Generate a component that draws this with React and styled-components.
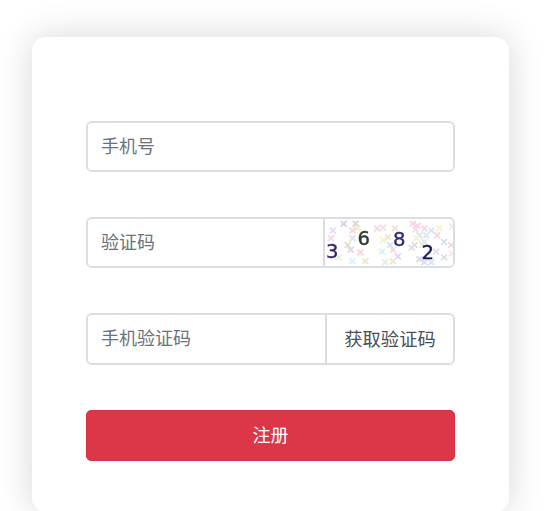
import React from "react";
import styled, { createGlobalStyle } from "styled-components";

const Global = createGlobalStyle`
  html, body { margin: 0; padding: 0; background: #fff; height: 511px; overflow: hidden; }
  body { font-family: "Noto Sans CJK SC", "Liberation Sans", sans-serif; }
  #root { height: 511px; overflow: hidden; }
`;

const Page = styled.div`
  height: 511px;
  padding: 37px 41px 0 32px;
  box-sizing: border-box;
  overflow: hidden;
`;

const Card = styled.form`
  height: 475px;
  box-sizing: border-box;
  padding: 84px 54px 0;
  background: #fff;
  border-radius: 14px;
  box-shadow: 0 0 36px rgba(0, 0, 0, 0.16);
  display: flex;
  flex-direction: column;
  gap: 45px;
`;

const Group = styled.div`
  display: flex;
  height: ${(p) => (p.$tall ? 52 : 51)}px;
  box-sizing: border-box;
  border: 2px solid #d9dee4;
  border-radius: 6px;
  overflow: hidden;
`;

const Field = styled.input`
  flex: 1;
  min-width: 0;
  border: 0;
  outline: 0;
  padding: 0 13px 4px;
  font: 400 18px "Noto Sans CJK SC", sans-serif;
  color: #495057;
  background: #fff;
  &::placeholder { color: #6a737c; opacity: 1; }
`;

const CaptchaBox = styled.div`
  width: 130px;
  flex: none;
  box-sizing: border-box;
  border-left: 2px solid #d9dee4;
  svg { display: block; }
`;

const SendButton = styled.button`
  width: 128px;
  flex: none;
  border: 0;
  border-left: 2px solid #d9dee4;
  background: #fff;
  padding: 0 0 3px;
  font: 400 18.3px "Noto Sans CJK SC", sans-serif;
  color: #495057;
`;

const Submit = styled.button`
  height: 51px;
  border: 1px solid #d92f45;
  border-radius: 5px;
  background: #db3749;
  color: #fff;
  padding: 0 0 4px;
  font: 400 18px "Noto Sans CJK SC", sans-serif;
`;

const crosses = [
  [19, 5, "#cdb6d6"], [31, 5, "#c9c3c9"], [28, 12, "#f3bfe0"], [8, 12, "#d9ccf0"],
  [6, 20, "#f7c7da"], [33, 10, "#efe6a8"], [28, 20, "#d6d2ea"], [23, 27, "#d8d3b0"],
  [26, 32, "#d3c6e6"], [36, 35, "#f5c3c8"], [41, 44, "#e3e0b2"], [28, 44, "#bff3f0"],
  [14, 40, "#cdeecb"], [53, 10, "#f8c6d0"], [59, 9, "#f6c8d8"], [71, 10, "#e7d7c0"],
  [64, 19, "#e5dcb4"], [59, 22, "#f0f0b5"], [66, 27, "#bdd8f5"], [58, 34, "#bff2e4"],
  [69, 32, "#f8c8d0"], [74, 39, "#d8c0ea"], [61, 45, "#c8eec5"], [69, 44, "#e6d9b4"],
  [89, 5, "#f3c2d6"], [94, 7, "#f6bfce"], [101, 10, "#f3c4cc"], [92, 11, "#e8d2e6"],
  [116, 10, "#f3efb4"], [108, 12, "#b9dcf6"], [96, 17, "#c7dbe6"], [103, 17, "#c3dde4"],
  [114, 17, "#f9c2cb"], [93, 20, "#eeeeb4"], [101, 24, "#c6e6e0"], [121, 24, "#bcd6f2"],
  [128, 27, "#f6c4d0"], [91, 27, "#d4d6c6"], [88, 30, "#d6ccd9"], [99, 27, "#e2e6c0"],
  [113, 34, "#d8c8ee"], [96, 42, "#c8c8e8"], [121, 40, "#cdcdcd"], [101, 45, "#dcc8e0"],
  [108, 45, "#c4dcf0"], [129, 8, "#dfe3ee"], [129, 36, "#f0e0ec"],
];

const digits = [
  { ch: "3", x: 1, y: 41, fill: "#3a1f6e" },
  { ch: "6", x: 33, y: 27, fill: "#2c3a2c" },
  { ch: "8", x: 69, y: 28, fill: "#2c2a80" },
  { ch: "2", x: 98, y: 42, fill: "#15155e" },
];

function Captcha() {
  return (
    <svg width="128" height="47" viewBox="0 0 130 49" preserveAspectRatio="none" role="img" aria-label="captcha">
      <defs>
        <filter id="soft" x="-10%" y="-10%" width="120%" height="120%">
          <feGaussianBlur stdDeviation="0.45" />
        </filter>
        <filter id="softer" x="-10%" y="-10%" width="120%" height="120%">
          <feGaussianBlur stdDeviation="0.55" />
        </filter>
      </defs>
      <rect width="130" height="49" fill="#fff" />
      <g filter="url(#softer)" opacity="0.7">
        {crosses.map(([x, y, c], i) => (
          <path
            key={i}
            d={`M${x - 3} ${y - 3}L${x + 3} ${y + 3}M${x + 3} ${y - 3}L${x - 3} ${y + 3}`}
            stroke={c}
            strokeWidth="1.8"
            fill="none"
          />
        ))}
      </g>
      <g filter="url(#soft)">
        {digits.map((d) => (
          <text
            key={d.ch}
            x={d.x}
            y={d.y}
            fill={d.fill}
            stroke={d.fill}
            strokeWidth="0.4"
            fontFamily="'DejaVu Sans', sans-serif"
            fontSize="20"
          >
            {d.ch}
          </text>
        ))}
      </g>
    </svg>
  );
}

export default function App() {
  return (
    <Page>
      <Global />
      <Card>
        <Group>
          <Field placeholder="手机号" />
        </Group>
        <Group>
          <Field placeholder="验证码" />
          <CaptchaBox>
            <Captcha />
          </CaptchaBox>
        </Group>
        <Group $tall>
          <Field placeholder="手机验证码" />
          <SendButton type="button">获取验证码</SendButton>
        </Group>
        <Submit type="button">注册</Submit>
      </Card>
    </Page>
  );
}
